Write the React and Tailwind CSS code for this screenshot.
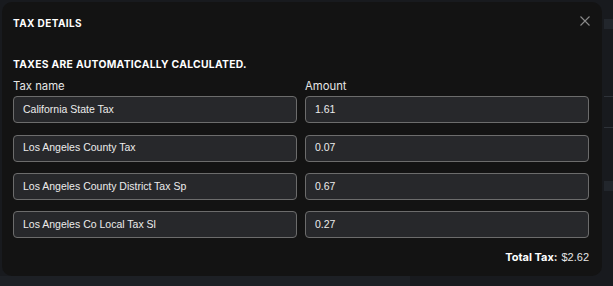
const rows = [
  {name: 'California State Tax', amount: '1.61'},
  {name: 'Los Angeles County Tax', amount: '0.07'},
  {name: 'Los Angeles County District Tax Sp', amount: '0.67'},
  {name: 'Los Angeles Co Local Tax Sl', amount: '0.27'},
];

const heading = {fontFamily: 'Inter, "Open Sans", sans-serif'};
const body = {fontFamily: '"Liberation Sans", Arial, sans-serif'};

export default function App() {
  return (
      <div className="relative h-[286px] w-[613px] overflow-hidden bg-[#181a1e]">
        {/* faint page behind the modal */}
        <div className="absolute left-[604px] top-[19px] h-[10px] w-[20px] bg-[#22262c]"/>
        <div className="absolute left-[604px] top-[96px] h-px w-[20px] bg-[#2e3238]"/>
        <div className="absolute left-[604px] top-[127px] h-px w-[20px] bg-[#2e3238]"/>
        <div className="absolute left-[604px] top-[181px] h-[10px] w-[20px] bg-[#22262c]"/>
        <div className="absolute left-0 top-[276px] h-[10px] w-[410px] bg-[#1d2025]"/>

        <div
            className="absolute left-[2px] top-[2px] flex h-[274px] w-[600px] flex-col rounded-[10px] bg-[#131313] pl-[11px] pr-[13px] text-white"
            style={heading}>
          <div className="flex h-[40px] items-center justify-between pt-[3px]">
            <h2 className="text-[10px] font-bold tracking-[0.04em]">TAX DETAILS</h2>
            <button className="-mr-[1px] mb-[6px] text-[#8a8a8a]">
              <svg width="10" height="10" viewBox="0 0 10 10" fill="none" stroke="currentColor" strokeWidth="1.1">
                <path d="M0.5 0.5L9.5 9.5M9.5 0.5L0.5 9.5"/>
              </svg>
            </button>
          </div>

          <p className="mt-[15px] text-[10.3px] font-bold tracking-[0.03em]">TAXES ARE AUTOMATICALLY CALCULATED.</p>

          <div className="mt-[6px] grid grid-cols-2 gap-x-[8px] text-[11.3px] text-[#e6e6e6]">
            <span>Tax name</span>
            <span>Amount</span>
          </div>

          <div className="mt-[1px] flex flex-col gap-[11.3px]" style={body}>
            {rows.map((r) => (
                <div key={r.name} className="grid grid-cols-2 gap-x-[8px]">
                  <div className="flex h-[27px] items-center rounded-[4px] border border-[#6c6c6c] bg-[#27282b] px-[9px] text-[10.5px] text-[#ececec]">
                    {r.name}
                  </div>
                  <div className="flex h-[27px] items-center rounded-[4px] border border-[#6c6c6c] bg-[#27282b] px-[9px] text-[10.5px] text-[#ececec]">
                    {r.amount}
                  </div>
                </div>
            ))}
          </div>

          <div className="mt-[11px] flex justify-end text-[11px]">
            <span className="font-bold">Total Tax:</span>
            <span className="ml-[4px] text-[#e6e6e6]" style={body}>$2.62</span>
          </div>
        </div>
      </div>
  );
}
